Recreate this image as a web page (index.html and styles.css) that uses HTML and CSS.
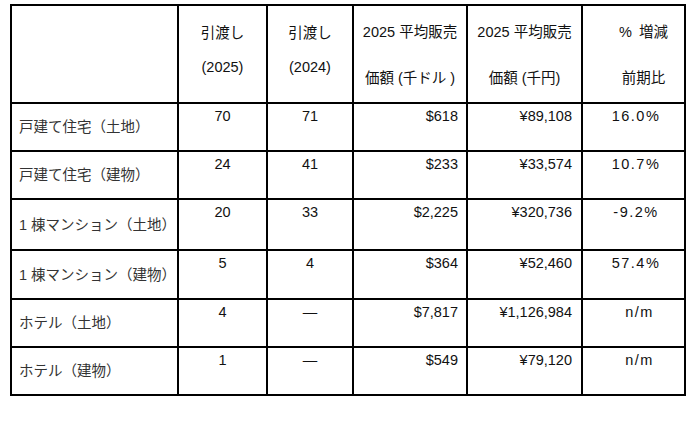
FILE: index.html
```html
<!DOCTYPE html>
<html lang="ja">
<head>
<meta charset="utf-8">
<title>引渡し実績</title>
<link rel="stylesheet" href="styles.css">
</head>
<body>
<table class="sales">
  <colgroup>
    <col class="c1"><col class="c2"><col class="c3"><col class="c4"><col class="c5"><col class="c6">
  </colgroup>
  <thead>
    <tr class="head">
      <th class="blank"></th>
      <th class="h-short">引渡し<br>(2025)</th>
      <th class="h-short">引渡し<br>(2024)</th>
      <th class="h-tall">2025 平均販売<br>価額 (千ドル )</th>
      <th class="h-tall">2025 平均販売<br>価額 (千円)</th>
      <th class="h-tall h-pct">% 増減<br>前期比</th>
    </tr>
  </thead>
  <tbody>
    <tr class="r48">
      <td class="name">戸建て住宅（土地）</td>
      <td class="num">70</td><td class="num">71</td>
      <td class="amt">$618</td><td class="amt yen">¥89,108</td><td class="pct">16.0%</td>
    </tr>
    <tr class="r48">
      <td class="name">戸建て住宅（建物）</td>
      <td class="num">24</td><td class="num">41</td>
      <td class="amt">$233</td><td class="amt yen">¥33,574</td><td class="pct">10.7%</td>
    </tr>
    <tr class="r51">
      <td class="name">1 棟マンション（土地）</td>
      <td class="num">20</td><td class="num">33</td>
      <td class="amt">$2,225</td><td class="amt yen">¥320,736</td><td class="pct">-9.2%</td>
    </tr>
    <tr class="r49">
      <td class="name">1 棟マンション（建物）</td>
      <td class="num">5</td><td class="num">4</td>
      <td class="amt">$364</td><td class="amt yen">¥52,460</td><td class="pct">57.4%</td>
    </tr>
    <tr class="r48">
      <td class="name">ホテル（土地）</td>
      <td class="num">4</td><td class="num">—</td>
      <td class="amt">$7,817</td><td class="amt yen">¥1,126,984</td><td class="pct nm">n/m</td>
    </tr>
    <tr class="r48">
      <td class="name">ホテル（建物）</td>
      <td class="num">1</td><td class="num">—</td>
      <td class="amt">$549</td><td class="amt yen">¥79,120</td><td class="pct nm">n/m</td>
    </tr>
  </tbody>
</table>
</body>
</html>
```
FILE: styles.css
```css
html, body {
  margin: 0;
  padding: 0;
  background: #fff;
}

body {
  font-family: "Liberation Sans", "Noto Sans CJK JP", sans-serif;
  font-size: 14.5px;
  color: #111;
}

.sales {
  margin: 4px 0 0 10px;
  border-collapse: separate;
  border-spacing: 0;
  table-layout: fixed;
  width: 676px;
  border-top: 2px solid #000;
  border-left: 2px solid #000;
}

.c1 { width: 167px; }
.c2 { width: 89px; }
.c3 { width: 86px; }
.c4 { width: 114px; }
.c5 { width: 115px; }
.c6 { width: 103px; }

.sales th,
.sales td {
  box-sizing: border-box;
  border-right: 2px solid #000;
  border-bottom: 2px solid #000;
  padding: 0;
  font-weight: normal;
  vertical-align: top;
  text-align: center;
  white-space: nowrap;
}

.head { height: 98px; }
.r48 { height: 48px; }
.r49 { height: 49px; }
.r51 { height: 51px; }

.sales th.h-short {
  line-height: 34px;
  padding-top: 10px;
}

.sales th.h-tall {
  line-height: 46px;
  padding-top: 3px;
}

.sales th.h-pct {
  padding-left: 20px;
  word-spacing: 3px;
}

.sales td {
  line-height: 18px;
  padding-top: 3px;
}

.sales td.name {
  vertical-align: middle;
  text-align: left;
  padding: 0 0 0 7px;
  color: #333;
}

.sales td.amt {
  text-align: right;
  padding-right: 8px;
}

.sales td.yen {
  padding-right: 9px;
}

.sales td.pct {
  letter-spacing: 1.5px;
  padding-left: 5px;
}

.sales td.nm {
  padding-left: 12px;
}
```
